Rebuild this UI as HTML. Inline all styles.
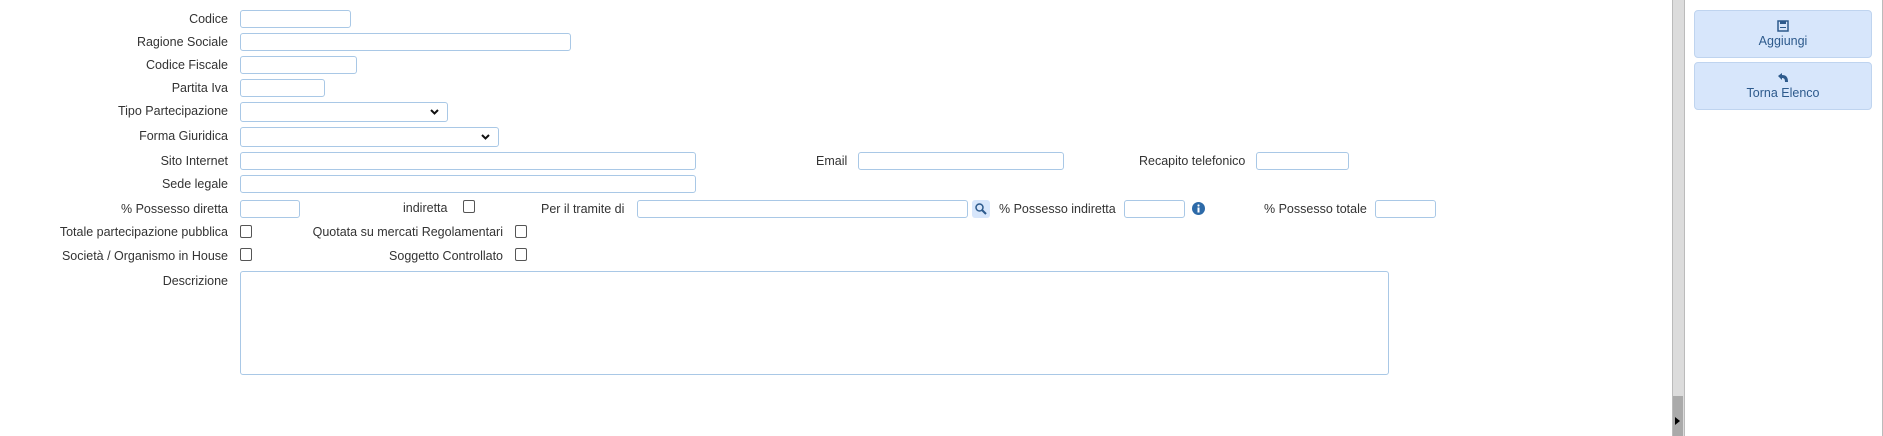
<!DOCTYPE html>
<html><head><meta charset="utf-8"><style>
body{margin:0;width:1883px;height:436px;background:#fff;font-family:"Liberation Sans",sans-serif;font-size:12.5px;color:#333;position:relative;overflow:hidden}
.l{position:absolute;text-align:right;white-space:nowrap;line-height:14px}
.i{position:absolute;box-sizing:border-box;border:1px solid #a9c8e6;border-radius:3px;background:#fff}
.c{position:absolute;box-sizing:border-box;width:12px;height:13px;border:1px solid #555;border-radius:2px;background:#fff}
.btn{position:absolute;left:1694px;width:178px;height:48px;box-sizing:border-box;background:#d7e6fb;border:1px solid #bfd4ef;border-radius:4px;color:#2d5a8c;text-align:center;font-size:12.5px}
</style></head><body>
<div class="l" style="right:1655px;top:12px">Codice</div><div class="i" style="left:240px;top:10px;width:111px;height:18px"></div>
<div class="l" style="right:1655px;top:35px">Ragione Sociale</div><div class="i" style="left:240px;top:33px;width:331px;height:18px"></div>
<div class="l" style="right:1655px;top:58px">Codice Fiscale</div><div class="i" style="left:240px;top:56px;width:117px;height:18px"></div>
<div class="l" style="right:1655px;top:81px">Partita Iva</div><div class="i" style="left:240px;top:79px;width:85px;height:18px"></div>
<div class="l" style="right:1655px;top:104px">Tipo Partecipazione</div><div class="i" style="left:240px;top:102px;width:208px;height:20px"><svg style="position:absolute;right:8px;top:6px" width="9" height="6"><path d="M1 1l3.5 3.5L8 1" stroke="#111" stroke-width="2" fill="none"/></svg></div>
<div class="l" style="right:1655px;top:129px">Forma Giuridica</div><div class="i" style="left:240px;top:127px;width:259px;height:20px"><svg style="position:absolute;right:8px;top:6px" width="9" height="6"><path d="M1 1l3.5 3.5L8 1" stroke="#111" stroke-width="2" fill="none"/></svg></div>
<div class="l" style="right:1655px;top:154px">Sito Internet</div><div class="i" style="left:240px;top:152px;width:456px;height:18px"></div>
<div class="l" style="left:816px;top:154px">Email</div><div class="i" style="left:858px;top:152px;width:206px;height:18px"></div>
<div class="l" style="left:1139px;top:154px">Recapito telefonico</div><div class="i" style="left:1256px;top:152px;width:93px;height:18px"></div>
<div class="l" style="right:1655px;top:177px">Sede legale</div><div class="i" style="left:240px;top:175px;width:456px;height:18px"></div>
<div class="l" style="right:1655px;top:202px">% Possesso diretta</div><div class="i" style="left:240px;top:200px;width:60px;height:18px"></div>
<div class="l" style="left:403px;top:201px">indiretta</div><div class="c" style="left:463px;top:200px"></div>
<div class="l" style="left:541px;top:202px">Per il tramite di</div><div class="i" style="left:637px;top:200px;width:331px;height:18px"></div>
<div style="position:absolute;left:972px;top:200px;width:18px;height:18px;background:#d7e6fb;border-radius:3px"><svg width="18" height="18"><circle cx="7.5" cy="7.5" r="3.5" stroke="#2d5a8c" stroke-width="1.5" fill="none"/><path d="M10 10l4 4" stroke="#2d5a8c" stroke-width="2"/></svg></div>
<div class="l" style="left:999px;top:202px">% Possesso indiretta</div><div class="i" style="left:1124px;top:200px;width:61px;height:18px"></div>
<svg style="position:absolute;left:1192px;top:202px" width="13" height="13"><circle cx="6.5" cy="6.5" r="6.5" fill="#2d6aa8"/><rect x="5.5" y="5.5" width="2" height="5" fill="#fff"/><circle cx="6.5" cy="3.5" r="1.1" fill="#fff"/></svg>
<div class="l" style="left:1264px;top:202px">% Possesso totale</div><div class="i" style="left:1375px;top:200px;width:61px;height:18px"></div>
<div class="l" style="right:1655px;top:225px">Totale partecipazione pubblica</div><div class="c" style="left:240px;top:225px"></div>
<div class="l" style="right:1380px;top:225px">Quotata su mercati Regolamentari</div><div class="c" style="left:515px;top:225px"></div>
<div class="l" style="right:1655px;top:249px">Società / Organismo in House</div><div class="c" style="left:240px;top:248px"></div>
<div class="l" style="right:1380px;top:249px">Soggetto Controllato</div><div class="c" style="left:515px;top:248px"></div>
<div class="l" style="right:1655px;top:274px">Descrizione</div><div class="i" style="left:240px;top:271px;width:1149px;height:104px"></div>
<div style="position:absolute;left:1672px;top:0;width:11px;height:436px;background:#dcdcdc;border-left:1px solid #bbb;border-right:1px solid #bbb"></div>
<div style="position:absolute;left:1673px;top:396px;width:10px;height:40px;background:#aaa"></div>
<div style="position:absolute;left:1675px;top:417px;width:0;height:0;border-left:5px solid #000;border-top:4px solid transparent;border-bottom:4px solid transparent"></div>
<div style="position:absolute;left:1882px;top:0;width:1px;height:436px;background:#bbb"></div>
<div class="btn" style="top:10px"><svg style="display:block;margin:9px auto 0" width="12" height="12"><rect x="1" y="1" width="10" height="10" fill="none" stroke="#2d5a8c" stroke-width="1.5"/><rect x="3" y="1" width="6" height="3" fill="#2d5a8c"/><rect x="3" y="7" width="6" height="1" fill="#2d5a8c"/></svg><div style="margin-top:2px">Aggiungi</div></div>
<div class="btn" style="top:62px"><svg style="display:block;margin:9px auto 0" width="12" height="12"><path d="M1 4l4-3v2c4 0 6 2 6 7h-3c0-3-1-4-3-4v2z" fill="#2d5a8c"/></svg><div style="margin-top:2px">Torna Elenco</div></div>
</body></html>
